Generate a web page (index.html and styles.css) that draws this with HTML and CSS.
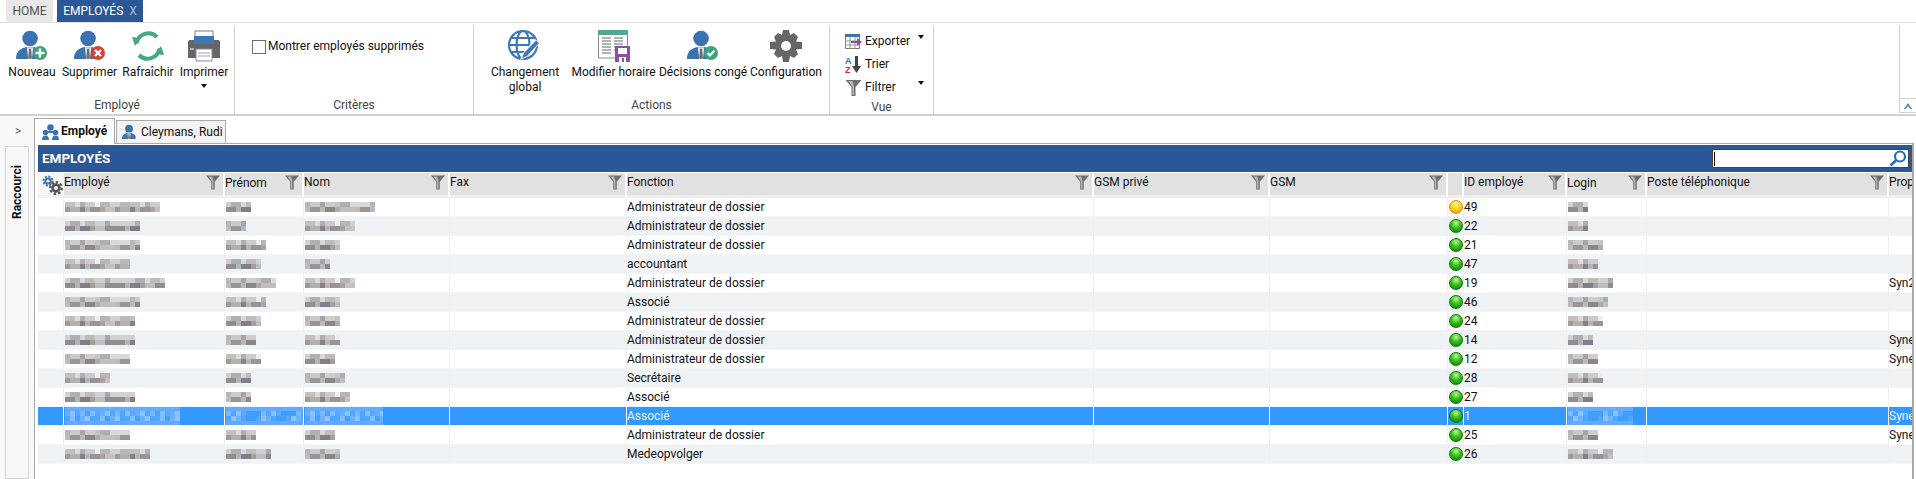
FILE: index.html
```html
<!DOCTYPE html>
<html lang="fr">
<head>
<meta charset="utf-8">
<title>Employés</title>
<link rel="stylesheet" href="styles.css">
</head>
<body>
<svg class="defs" width="0" height="0" aria-hidden="true">
  <defs>
    <symbol id="person" viewBox="0 0 32 32">
      <circle cx="15" cy="9" r="8.3" fill="#3b73b1"/>
      <path d="M0 31c0-7 3-11 11-13l4 1 4-1c5 1 8 3 10 7v6z" fill="#3b73b1"/>
      <path d="M11.5 18l3.5 1.5L18.500 18 17 31h-4z" fill="#e4e4e4"/>
      <path d="M14 20h2l1 10-2 1-2-1z" fill="#6d6d6d"/>
    </symbol>
    <symbol id="funnel" viewBox="0 0 16 16">
      <path d="M0 0h16L10 7v9H6V7z" fill="#6f6f6f"/>
      <path d="M3 1h4l1.500 5v9H7V7z" fill="#b7b7b7"/>
    </symbol>
    <symbol id="caret" viewBox="0 0 6 4">
      <path d="M0 0h6L3 4z" fill="#111"/>
    </symbol>
  </defs>
</svg>

<nav class="apptabs">
  <span class="apptab">HOME</span>
  <span class="apptab apptab-on">EMPLOYÉS <i class="close">X</i></span>
</nav>

<header class="ribbon">
  <section class="group g-emp">
    <div class="tools">
      <div class="tool t56">
        <svg class="ico" width="32" height="32" viewBox="0 0 32 32"><use href="#person" width="30" height="30"/><circle cx="24" cy="23" r="7" fill="#3fa27a"/><path d="M24 18.500v9M19.500 23h9" stroke="#fff" stroke-width="2.400"/></svg>
        <span>Nouveau</span>
      </div>
      <div class="tool t59">
        <svg class="ico" width="32" height="32" viewBox="0 0 32 32"><use href="#person" width="30" height="30"/><circle cx="24" cy="23" r="7" fill="#d4422f"/><path d="M21 20l6 6M27 20l-6 6" stroke="#fff" stroke-width="2.400"/></svg>
        <span>Supprimer</span>
      </div>
      <div class="tool t58">
        <svg class="ico" width="32" height="32" viewBox="0 0 32 32">
          <path d="M4.500 13.500A12 12 0 0 1 25 7" fill="none" stroke="#43a883" stroke-width="4"/>
          <path d="M27.500 18.500A12 12 0 0 1 7 25" fill="none" stroke="#43a883" stroke-width="4"/>
          <path d="M0 8l9 1-6 8z" fill="#43a883" transform="translate(0 -1)"/>
          <path d="M32 24l-9-1 6-8z" fill="#43a883" transform="translate(0 1)"/>
        </svg>
        <span>Rafraîchir</span>
      </div>
      <div class="tool t54">
        <svg class="ico" width="32" height="32" viewBox="0 0 32 32">
          <path d="M7 1h18v8H7z" fill="#fff" stroke="#7a7a7a"/>
          <path d="M0 12q0-2 2-2h28q2 0 2 2v16H0z" fill="#666"/>
          <path d="M6 6h20v8H6z" fill="#3b78b8"/>
          <path d="M8 19h16v12H8z" fill="#fff" stroke="#8a8a8a"/>
          <path d="M10 23h12M10 26h12" stroke="#89a9cc"/>
          <path d="M2 19h4" stroke="#fff"/>
        </svg>
        <span>Imprimer</span>
        <svg class="drop" width="6" height="4"><use href="#caret"/></svg>
      </div>
    </div>
    <div class="gname">Employé</div>
  </section>

  <section class="group g-crit">
    <label class="check"><span class="box"></span>Montrer employés supprimés</label>
    <div class="gname">Critères</div>
  </section>

  <section class="group g-act">
    <div class="tools">
      <div class="tool t82">
        <svg class="ico" width="34" height="32" viewBox="0 0 34 32">
          <g fill="none" stroke="#3f78b5" stroke-width="2.200"><circle cx="15" cy="15" r="14"/><ellipse cx="15" cy="15" rx="6.500" ry="14"/><path d="M1 15h28M3.500 8h23M3.500 22h17"/></g>
          <path d="M27 9l5 4-13 14-7 3 3-7z" fill="#fff"/>
          <path d="M28 10.500l3 2.500-12 13-5 2 2-5z" fill="#3f78b5"/>
        </svg>
        <span>Changement<br>global</span>
      </div>
      <div class="tool t95">
        <svg class="ico" width="32" height="32" viewBox="0 0 32 32">
          <path d="M.5 1h29v27H.5z" fill="#fff" stroke="#8a8a8a"/>
          <path d="M0 0h30v5H0z" fill="#4fa98a"/>
          <path d="M4 8h9M16 8h9M4 11h9M16 11h9M4 14h9M16 14h9M4 17h9M16 17h9M4 20h9M16 20h9M4 23h9" stroke="#666"/>
          <path d="M17 16h15v16H17z" fill="#8a4fa6"/>
          <path d="M20 18h9v6h-9z" fill="#fff"/>
          <path d="M21 27h7v5h-7z" fill="#fff"/>
          <path d="M24 28h2v4h-2z" fill="#8a4fa6"/>
        </svg>
        <span>Modifier horaire</span>
      </div>
      <div class="tool t84">
        <svg class="ico" width="32" height="32" viewBox="0 0 32 32"><use href="#person" width="30" height="30"/><circle cx="24" cy="23" r="7" fill="#3fa27a"/><path d="M20.500 23l2.500 2.500 4.500-5" fill="none" stroke="#fff" stroke-width="2.200"/></svg>
        <span>Décisions congé</span>
      </div>
      <div class="tool t82">
        <svg class="ico" width="32" height="32" viewBox="0 0 32 32">
          <path fill="#666" d="M13 0h6l1 5 4-2 4 4-2 4.500 6 .5v7l-6 .5 2 4.500-4 4-4-2-1 6h-6l-1-6-4 2-4-4 2-4.500-6-.5v-7l6-.5L4 7l4-4 4 2z"/>
          <circle cx="16" cy="16" r="5" fill="#fff"/>
        </svg>
        <span>Configuration</span>
      </div>
    </div>
    <div class="gname">Actions</div>
  </section>

  <section class="group g-vue">
    <ul class="mini">
      <li>
        <svg width="17" height="16" viewBox="0 0 17 16"><path d="M.5.500h14v14H.500z" fill="#fff" stroke="#777"/><path d="M0 0h15v3H0z" fill="#3b73b1"/><path d="M5 3v12M10 3v12M0 7h15M0 11h15" stroke="#999"/><path d="M6 7h6V4l5 4-5 4V9H6z" fill="#8a4fa6"/></svg>
        <span>Exporter</span>
        <svg class="mini-drop" width="6" height="4"><use href="#caret"/></svg>
      </li>
      <li>
        <svg width="17" height="17" viewBox="0 0 17 17"><text class="az az-a" x="0" y="8">A</text><text class="az az-z" x="0" y="16.500">Z</text><path d="M10 0h3v10h3l-4.500 7L7 10h3z" fill="#444"/></svg>
        <span>Trier</span>
      </li>
      <li>
        <svg width="17" height="16" viewBox="0 0 16 16"><use href="#funnel"/></svg>
        <span>Filtrer</span>
        <svg class="mini-drop" width="6" height="4"><use href="#caret"/></svg>
      </li>
    </ul>
    <div class="gname">Vue</div>
  </section>

  <div class="ribbon-fill"></div>
  <div class="ribbon-end">
    <div class="collapse"><svg width="8" height="6" viewBox="0 0 8 6"><path d="M0 6l4-6 4 6-2 0-2-3-2 3z" fill="#5b85b5"/></svg></div>
  </div>
</header>

<main class="work">
  <aside class="side">
    <div class="expand">&gt;</div>
    <div class="shortcut"><span>Raccourci</span></div>
  </aside>
  <div class="content">
    <div class="doctabs">
      <div class="doctab doctab-on">
        <svg width="17" height="16" viewBox="0 0 34 32">
          <g fill="#3b73b1"><circle cx="17" cy="7" r="6.500"/><circle cx="7" cy="17" r="5.500"/><circle cx="27" cy="17" r="5.500"/><path d="M0 32c0-6 2-9 7-9s7 3 7 9zM20 32c0-6 2-9 7-9s7 3 7 9z"/><path d="M11 15c1-1 3-1 6-1s5 0 6 1v3h-12z"/></g>
        </svg>
        Employé
      </div>
      <div class="doctab doctab-2">
        <svg width="15" height="16" viewBox="0 0 32 32"><use href="#person"/></svg>
        Cleymans, Rudi
      </div>
    </div>
    <div class="panel">
      <div class="titlebar">
        <span class="title">EMPLOYÉS</span>
        <div class="search">
          <span class="cursor"></span>
          <svg width="18" height="17" viewBox="0 0 18 17"><circle cx="11" cy="6.500" r="5" fill="none" stroke="#1f6fc0" stroke-width="2.200"/><path d="M7 10.500l-5.500 5" stroke="#1f6fc0" stroke-width="2.600"/></svg>
        </div>
      </div>
      <table class="grid">
        <colgroup>
          <col class="c-gear"><col class="c-emp"><col class="c-pre"><col class="c-nom"><col class="c-fax"><col class="c-fon"><col class="c-gp"><col class="c-gsm"><col class="c-st"><col class="c-id"><col class="c-log"><col class="c-pos"><col class="c-pro">
        </colgroup>
        <thead>
          <tr>
            <th class="th-gear">
              <svg width="22" height="20" viewBox="0 0 22 20"><g fill="none" stroke="#3b73b1"><circle cx="6" cy="6" r="2.600" stroke-width="2"/><circle cx="6" cy="6" r="4.500" stroke-width="2" stroke-dasharray="2 1.500"/></g><g fill="none" stroke="#555"><circle cx="14" cy="13" r="3.400" stroke-width="2.600"/><circle cx="14" cy="13" r="5.800" stroke-width="2.400" stroke-dasharray="2.400 2"/></g></svg>
            </th>
            <th><div class="hd"><span>Employé</span><svg width="14" height="15"><use href="#funnel"/></svg></div></th>
            <th><div class="hd low"><span>Prénom</span><svg width="14" height="15"><use href="#funnel"/></svg></div></th>
            <th><div class="hd"><span>Nom</span><svg width="14" height="15"><use href="#funnel"/></svg></div></th>
            <th><div class="hd"><span>Fax</span><svg width="14" height="15"><use href="#funnel"/></svg></div></th>
            <th><div class="hd"><span>Fonction</span><svg width="14" height="15"><use href="#funnel"/></svg></div></th>
            <th><div class="hd"><span>GSM privé</span><svg width="14" height="15"><use href="#funnel"/></svg></div></th>
            <th><div class="hd"><span>GSM</span><svg width="14" height="15"><use href="#funnel"/></svg></div></th>
            <th></th>
            <th><div class="hd"><span>ID employé</span><svg width="14" height="15"><use href="#funnel"/></svg></div></th>
            <th><div class="hd low"><span>Login</span><svg width="14" height="15"><use href="#funnel"/></svg></div></th>
            <th><div class="hd"><span>Poste téléphonique</span><svg width="14" height="15"><use href="#funnel"/></svg></div></th>
            <th><div class="hd clip"><span>Prop</span></div></th>
          </tr>
        </thead>
        <tbody>
          <tr><td></td><td class="bl"><i class="mz m1 w95"></i></td><td class="bl"><i class="mz m2 w25"></i></td><td class="bl"><i class="mz m3 w70"></i></td><td></td><td>Administrateur de dossier</td><td></td><td></td><td class="st"><i class="dot dot-y"></i></td><td>49</td><td class="bl"><i class="mz m2 w20"></i></td><td></td><td></td></tr>
          <tr class="alt"><td></td><td class="bl"><i class="mz m2 w75"></i></td><td class="bl"><i class="mz m3 w20"></i></td><td class="bl"><i class="mz m1 w50"></i></td><td></td><td>Administrateur de dossier</td><td></td><td></td><td class="st"><i class="dot"></i></td><td>22</td><td class="bl"><i class="mz m1 w20"></i></td><td></td><td></td></tr>
          <tr><td></td><td class="bl"><i class="mz m3 w75"></i></td><td class="bl"><i class="mz m1 w40"></i></td><td class="bl"><i class="mz m2 w35"></i></td><td></td><td>Administrateur de dossier</td><td></td><td></td><td class="st"><i class="dot"></i></td><td>21</td><td class="bl"><i class="mz m3 w35"></i></td><td></td><td></td></tr>
          <tr class="alt"><td></td><td class="bl"><i class="mz m1 w65"></i></td><td class="bl"><i class="mz m2 w35"></i></td><td class="bl"><i class="mz m3 w25"></i></td><td></td><td>accountant</td><td></td><td></td><td class="st"><i class="dot"></i></td><td>47</td><td class="bl"><i class="mz m1 w30"></i></td><td></td><td></td></tr>
          <tr><td></td><td class="bl"><i class="mz m2 w100"></i></td><td class="bl"><i class="mz m3 w50"></i></td><td class="bl"><i class="mz m1 w50"></i></td><td></td><td>Administrateur de dossier</td><td></td><td></td><td class="st"><i class="dot"></i></td><td>19</td><td class="bl"><i class="mz m2 w45"></i></td><td></td><td class="clip">Syn2</td></tr>
          <tr class="alt"><td></td><td class="bl"><i class="mz m3 w75"></i></td><td class="bl"><i class="mz m1 w40"></i></td><td class="bl"><i class="mz m2 w35"></i></td><td></td><td>Associé</td><td></td><td></td><td class="st"><i class="dot"></i></td><td>46</td><td class="bl"><i class="mz m3 w40"></i></td><td></td><td></td></tr>
          <tr><td></td><td class="bl"><i class="mz m1 w70"></i></td><td class="bl"><i class="mz m2 w35"></i></td><td class="bl"><i class="mz m3 w35"></i></td><td></td><td>Administrateur de dossier</td><td></td><td></td><td class="st"><i class="dot"></i></td><td>24</td><td class="bl"><i class="mz m1 w35"></i></td><td></td><td></td></tr>
          <tr class="alt"><td></td><td class="bl"><i class="mz m2 w70"></i></td><td class="bl"><i class="mz m3 w30"></i></td><td class="bl"><i class="mz m1 w35"></i></td><td></td><td>Administrateur de dossier</td><td></td><td></td><td class="st"><i class="dot"></i></td><td>14</td><td class="bl"><i class="mz m2 w25"></i></td><td></td><td class="clip">Syne</td></tr>
          <tr><td></td><td class="bl"><i class="mz m3 w65"></i></td><td class="bl"><i class="mz m1 w35"></i></td><td class="bl"><i class="mz m2 w30"></i></td><td></td><td>Administrateur de dossier</td><td></td><td></td><td class="st"><i class="dot"></i></td><td>12</td><td class="bl"><i class="mz m3 w30"></i></td><td></td><td class="clip">Syne</td></tr>
          <tr class="alt"><td></td><td class="bl"><i class="mz m1 w45"></i></td><td class="bl"><i class="mz m2 w25"></i></td><td class="bl"><i class="mz m3 w40"></i></td><td></td><td>Secrétaire</td><td></td><td></td><td class="st"><i class="dot"></i></td><td>28</td><td class="bl"><i class="mz m1 w35"></i></td><td></td><td></td></tr>
          <tr><td></td><td class="bl"><i class="mz m2 w70"></i></td><td class="bl"><i class="mz m3 w25"></i></td><td class="bl"><i class="mz m1 w45"></i></td><td></td><td>Associé</td><td></td><td></td><td class="st"><i class="dot"></i></td><td>27</td><td class="bl"><i class="mz m2 w25"></i></td><td></td><td></td></tr>
          <tr class="sel"><td></td><td class="bl"><i class="mz s1 w115"></i></td><td class="bl"><i class="mz s2 w78"></i></td><td class="bl"><i class="mz s1 w78"></i></td><td></td><td>Associé</td><td></td><td></td><td class="st"><i class="dot"></i></td><td>1</td><td class="bl"><i class="mz s2 w65"></i></td><td></td><td class="clip">Syne</td></tr>
          <tr><td></td><td class="bl"><i class="mz m3 w65"></i></td><td class="bl"><i class="mz m1 w30"></i></td><td class="bl"><i class="mz m2 w30"></i></td><td></td><td>Administrateur de dossier</td><td></td><td></td><td class="st"><i class="dot"></i></td><td>25</td><td class="bl"><i class="mz m3 w30"></i></td><td></td><td class="clip">Syne</td></tr>
          <tr class="alt"><td></td><td class="bl"><i class="mz m1 w85"></i></td><td class="bl"><i class="mz m2 w45"></i></td><td class="bl"><i class="mz m3 w35"></i></td><td></td><td>Medeopvolger</td><td></td><td></td><td class="st"><i class="dot"></i></td><td>26</td><td class="bl"><i class="mz m1 w45"></i></td><td></td><td></td></tr>
        </tbody>
      </table>
    </div>
  </div>
</main>
</body>
</html>
```

FILE: styles.css
```css
* { box-sizing: border-box; }
html, body { height: 100%; }
body {
  margin: 0;
  background: #fff;
  color: #111;
  font: 12px/15px Roboto, "Liberation Sans", sans-serif;
  overflow: hidden;
}
.defs { position: absolute; }

/* application tabs */
.apptabs {
  display: flex;
  gap: 4px;
  height: 23px;
  padding-left: 6px;
  border-bottom: 1px solid #e2e2e2;
}
.apptab {
  width: 47px;
  height: 22px;
  background: #e8e8e8;
  color: #555;
  font-size: 12px;
  line-height: 22px;
  text-align: center;
}
.apptab-on {
  width: 86px;
  background: #2b5797;
  color: #fff;
}
.close { font-style: normal; color: #a9bcd8; margin-left: 3px; }

/* ribbon */
.ribbon {
  display: flex;
  height: 93px;
  border-bottom: 2px solid #d3d1cb;
}
.group {
  display: flex;
  flex-direction: column;
  justify-content: space-between;
  margin-top: 2px;
  border-right: 1px solid #d3d1cb;
}
.g-emp { width: 235px; padding-left: 4px; }
.g-crit { width: 239px; }
.g-act { width: 356px; padding-left: 10px; }
.g-vue { width: 104px; }
.tools { display: flex; padding-top: 5px; }
.tool {
  display: flex;
  flex-direction: column;
  align-items: center;
  text-align: center;
  white-space: nowrap;
}
.t54 { width: 54px; }
.t56 { width: 56px; }
.t58 { width: 58px; }
.t59 { width: 59px; }
.t82 { width: 82px; }
.t84 { width: 84px; }
.t95 { width: 95px; }
.ico { display: block; margin-bottom: 3px; }
.drop { display: block; margin-top: 4px; }
.gname {
  height: 17px;
  color: #444;
  line-height: 17px;
  text-align: center;
}
.g-act .gname { margin-left: -10px; }
.g-emp .gname { margin-left: -4px; }
.check {
  display: flex;
  align-items: center;
  gap: 2px;
  margin: 14px 0 0 17px;
}
.box {
  width: 14px;
  height: 14px;
  border: 1px solid #6d6d6d;
  background: #fff;
}
.mini {
  list-style: none;
  margin: 5px 0 0 15px;
  padding: 0;
}
.mini li {
  position: relative;
  display: flex;
  align-items: center;
  gap: 3px;
  height: 23px;
}
.mini-drop { position: absolute; left: 73px; top: 5px; }
.az { font: bold 9px "Liberation Sans", sans-serif; }
.az-a { fill: #2f6fc0; }
.az-z { fill: #c8352a; }
.ribbon-fill { flex: 1; }
.ribbon-end {
  display: flex;
  flex-direction: column;
  justify-content: flex-end;
  width: 17px;
  border-left: 1px solid #d3d1cb;
  margin-top: 2px;
  height: 88px;
}
.collapse {
  display: flex;
  align-items: center;
  justify-content: center;
  height: 15px;
  border-top: 1px solid #d3d1cb;
  border-bottom: 1px solid #d3d1cb;
}

/* body */
.work {
  display: flex;
  height: 363px;
}
.side {
  width: 34px;
  flex: none;
  background: #f8f8f8;
  padding-left: 5px;
}
.expand {
  height: 30px;
  padding: 8px 0 0 10px;
  color: #666;
  font-size: 12px;
}
.shortcut {
  display: flex;
  justify-content: center;
  width: 24px;
  height: 333px;
  padding-top: 17px;
  border: 1px solid #d6d6d6;
  background: #f8f8f8;
}
.shortcut span {
  writing-mode: vertical-rl;
  transform: rotate(180deg);
  font-weight: 700;
  height: 55px;
}
.content {
  flex: 1;
  min-width: 0;
  padding-top: 2px;
  margin-right: 2px;
}
.doctabs {
  display: flex;
  align-items: flex-end;
  height: 25px;
}
.doctab {
  display: flex;
  align-items: center;
  gap: 4px;
  height: 23px;
  padding: 0 0 0 5px;
  border: 1px solid #a9a9a9;
  border-bottom: 0;
  background: #f3f3f3;
  font-size: 12px;
}
.doctab-2 { width: 110px; margin-left: 1px; }
.doctab-on {
  position: relative;
  width: 81px;
  height: 26px;
  margin-bottom: -1px;
  padding-left: 7px;
  gap: 2px;
  background: #fff;
  font-weight: 700;
}
.panel {
  height: 338px;
  padding: 1px 0 0 3px;
  border: 1px solid #a9a9a9;
  border-width: 1px 2px 0 1px;
}
.titlebar {
  display: flex;
  align-items: center;
  justify-content: space-between;
  height: 27px;
  margin-bottom: 1px;
  background: #2b5797;
  padding: 0 3px 0 4px;
}
.title {
  color: #fff;
  font-size: 13.500px;
  font-weight: 700;
}
.search {
  display: flex;
  align-items: center;
  justify-content: space-between;
  width: 197px;
  height: 19px;
  padding: 0 1px;
  background: #fff;
  border: 1px solid #444;
}
.cursor { width: 1px; height: 14px; background: #111; }

/* grid */
.grid {
  width: 1874px;
  table-layout: fixed;
  border-collapse: separate;
  border-spacing: 0;
}
.c-gear { width: 26px; }
.c-emp { width: 161px; }
.c-pre { width: 79px; }
.c-nom { width: 146px; }
.c-fax { width: 177px; }
.c-fon { width: 467px; }
.c-gp { width: 176px; }
.c-gsm { width: 178px; }
.c-st { width: 16px; }
.c-id { width: 103px; }
.c-log { width: 80px; }
.c-pos { width: 242px; }
.c-pro { width: 23px; }

.grid th {
  height: 25px;
  padding: 0;
  background: #e1e1e1;
  border-right: 2px solid #fff;
  border-bottom: 3px solid #f0f0f0;
  font-weight: 400;
  text-align: left;
  vertical-align: top;
  overflow: hidden;
}
.grid th:last-child { border-right: 0; }
.grid .th-gear {
  background: #f6f6f6;
  padding: 2px 0 0 4px;
  border-right: 0;
  line-height: 0;
}
.hd {
  display: flex;
  justify-content: space-between;
  padding: 2px 3px 0 0;
  white-space: nowrap;
  font-size: 12px;
}
.hd.low span { padding-top: 1px; }
.hd svg { flex: none; }
.clip { overflow: hidden; white-space: nowrap; }

.grid td {
  height: 19px;
  padding: 0;
  border-right: 1px solid #f0f0f0;
  border-bottom: 1px solid #f5f5f5;
  white-space: nowrap;
  overflow: hidden;
  line-height: 17px;
}
.grid tbody td:last-child { border-right: 0; }
.alt td { background: #f0f3f6; }
.sel td {
  background: #3399ff;
  color: #e8f3ff;
  border-right-color: #fff;
  border-bottom-color: #fff;
}
.grid .st { padding-left: 1px; line-height: 0; }
.dot {
  display: block;
  width: 14px;
  height: 14px;
  border-radius: 50%;
  background: radial-gradient(circle at 50% 25%, #c8f5a8 0, #45c41f 40%, #0a8f0a 85%);
  border: 1px solid #0f7a0f;
}
.dot-y {
  background: radial-gradient(circle at 50% 25%, #fff2a8 0, #ffd21f 45%, #d9a400 90%);
  border-color: #c99800;
}

/* blurred personal data */
.grid .bl { line-height: 0; padding-left: 1px; }
.mz {
  display: block;
  height: 10px;
  background-repeat: repeat-x;
  background-position: 0 0, 0 5px;
  background-size: 65px 5px, 50px 5px;
}
.m1 {
  background-image:
    linear-gradient(90deg, #c4bfbe 0 10px, #dedada 10px 15px, #b3aeb3 15px 20px, #d0cbc9 20px 30px, #eeeeee 30px 35px, #b8b4b8 35px 45px, #d0cfd3 45px 55px, #bcb8b6 55px 65px),
    linear-gradient(90deg, #a09b97 0 5px, #b3b0b0 5px 15px, #878288 15px 20px, #b8b5b2 20px 25px, #97949e 25px 35px, #aaa39f 35px 40px, #c4c1c1 40px 50px);
}
.m2 {
  background-image:
    linear-gradient(90deg, #d4cfcf 0 5px, #b2afb3 5px 15px, #dbd7d6 15px 20px, #bfbbb7 20px 30px, #cdd0d6 30px 40px, #aca8a6 40px 45px, #d2d2d2 45px 65px),
    linear-gradient(90deg, #928e90 0 10px, #b1b4ba 10px 15px, #817d89 15px 25px, #a49f9b 25px 30px, #bcbec0 30px 40px, #908e92 40px 50px);
}
.m3 {
  background-image:
    linear-gradient(90deg, #b9b5b3 0 5px, #cacacd 5px 15px, #a9a4a4 15px 20px, #d0ccc9 20px 30px, #c2c5c8 30px 35px, #b3aeac 35px 45px, #dad9da 45px 65px),
    linear-gradient(90deg, #bfbbb9 0 5px, #999598 5px 15px, #b6b9bd 15px 20px, #8c8785 20px 30px, #acabaf 30px 35px, #c0bfbb 35px 50px);
}
.s1, .s2 {
  height: 18px;
  background-repeat: repeat-x, repeat-x, no-repeat;
  background-position: 0 4px, 0 9px, 0 0;
  background-size: 35px 5px, 30px 5px, 100% 100%;
}
.s1 {
  background-image:
    linear-gradient(90deg, #66aeff 0 5px, #8cc2ff 5px 10px, #4fa5ff 10px 15px, #78b8ff 15px 20px, #4da3ff 20px 25px, #83beff 25px 30px, #5aa9ff 30px 35px),
    linear-gradient(90deg, #52a6ff 0 5px, #80bcff 5px 10px, #45a0ff 10px 15px, #6cb2ff 15px 20px, #8cc2ff 20px 25px, #4fa5ff 25px 30px),
    linear-gradient(#62abff 0 4px, #3399ff 4px 14px, #62abff 14px);
}
.s2 {
  background-image:
    linear-gradient(90deg, #7ab9ff 0 5px, #4fa5ff 5px 10px, #8cc2ff 10px 15px, #5aa9ff 15px 20px, #3f9eff 20px 25px, #3f9eff 25px 30px, #3f9eff 30px 35px),
    linear-gradient(90deg, #52a6ff 0 5px, #8cc2ff 5px 10px, #6cb2ff 10px 15px, #4fa5ff 15px 20px, #3f9eff 20px 25px, #3f9eff 25px 30px),
    linear-gradient(#62abff 0 4px, #3399ff 4px 14px, #62abff 14px);
}
.w20 { width: 20px; }
.w25 { width: 25px; }
.w30 { width: 30px; }
.w35 { width: 35px; }
.w40 { width: 40px; }
.w45 { width: 45px; }
.w50 { width: 50px; }
.w65 { width: 65px; }
.w70 { width: 70px; }
.w75 { width: 75px; }
.w78 { width: 78px; }
.w85 { width: 85px; }
.w95 { width: 95px; }
.w100 { width: 100px; }
.w115 { width: 115px; }
```
